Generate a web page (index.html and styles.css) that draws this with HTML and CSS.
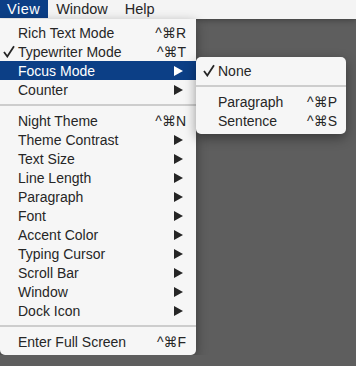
FILE: index.html
```html
<!DOCTYPE html>
<html lang="en">
<head>
    <meta charset="UTF-8">
    <meta name="viewport" content="width=device-width, initial-scale=1.0">
    <title>View menu</title>
    <link rel="stylesheet" href="styles.css">
</head>
<body>
    <div class="menubar">
        <span class="bar-item active">View</span>
        <span class="bar-item">Window</span>
        <span class="bar-item">Help</span>
    </div>

    <div class="menus">
        <div class="menu main-menu">
            <div class="row"><span class="gutter"></span><span class="label">Rich Text Mode</span><span class="key">^⌘R</span></div>
            <div class="row"><span class="gutter"><svg class="check" width="12" height="13" viewBox="0 0 12 13"><path d="M1 7 L4.3 11.5 L11 1.2" fill="none" stroke="currentColor" stroke-width="1.8"/></svg></span><span class="label">Typewriter Mode</span><span class="key">^⌘T</span></div>
            <div class="row selected"><span class="gutter"></span><span class="label">Focus Mode</span><span class="arrow"><svg width="9" height="10" viewBox="0 0 9 10"><polygon points="0,0 9,5 0,10" fill="currentColor"/></svg></span></div>
            <div class="row"><span class="gutter"></span><span class="label">Counter</span><span class="arrow"><svg width="9" height="10" viewBox="0 0 9 10"><polygon points="0,0 9,5 0,10" fill="currentColor"/></svg></span></div>
            <div class="separator"></div>
            <div class="row"><span class="gutter"></span><span class="label">Night Theme</span><span class="key">^⌘N</span></div>
            <div class="row"><span class="gutter"></span><span class="label">Theme Contrast</span><span class="arrow"><svg width="9" height="10" viewBox="0 0 9 10"><polygon points="0,0 9,5 0,10" fill="currentColor"/></svg></span></div>
            <div class="row"><span class="gutter"></span><span class="label">Text Size</span><span class="arrow"><svg width="9" height="10" viewBox="0 0 9 10"><polygon points="0,0 9,5 0,10" fill="currentColor"/></svg></span></div>
            <div class="row"><span class="gutter"></span><span class="label">Line Length</span><span class="arrow"><svg width="9" height="10" viewBox="0 0 9 10"><polygon points="0,0 9,5 0,10" fill="currentColor"/></svg></span></div>
            <div class="row"><span class="gutter"></span><span class="label">Paragraph</span><span class="arrow"><svg width="9" height="10" viewBox="0 0 9 10"><polygon points="0,0 9,5 0,10" fill="currentColor"/></svg></span></div>
            <div class="row"><span class="gutter"></span><span class="label">Font</span><span class="arrow"><svg width="9" height="10" viewBox="0 0 9 10"><polygon points="0,0 9,5 0,10" fill="currentColor"/></svg></span></div>
            <div class="row"><span class="gutter"></span><span class="label">Accent Color</span><span class="arrow"><svg width="9" height="10" viewBox="0 0 9 10"><polygon points="0,0 9,5 0,10" fill="currentColor"/></svg></span></div>
            <div class="row"><span class="gutter"></span><span class="label">Typing Cursor</span><span class="arrow"><svg width="9" height="10" viewBox="0 0 9 10"><polygon points="0,0 9,5 0,10" fill="currentColor"/></svg></span></div>
            <div class="row"><span class="gutter"></span><span class="label">Scroll Bar</span><span class="arrow"><svg width="9" height="10" viewBox="0 0 9 10"><polygon points="0,0 9,5 0,10" fill="currentColor"/></svg></span></div>
            <div class="row"><span class="gutter"></span><span class="label">Window</span><span class="arrow"><svg width="9" height="10" viewBox="0 0 9 10"><polygon points="0,0 9,5 0,10" fill="currentColor"/></svg></span></div>
            <div class="row"><span class="gutter"></span><span class="label">Dock Icon</span><span class="arrow"><svg width="9" height="10" viewBox="0 0 9 10"><polygon points="0,0 9,5 0,10" fill="currentColor"/></svg></span></div>
            <div class="separator"></div>
            <div class="row"><span class="gutter"></span><span class="label">Enter Full Screen</span><span class="key">^⌘F</span></div>
        </div>

        <div class="menu sub-menu">
            <div class="row"><span class="gutter"><svg class="check" width="12" height="13" viewBox="0 0 12 13"><path d="M1 7 L4.3 11.5 L11 1.2" fill="none" stroke="currentColor" stroke-width="1.8"/></svg></span><span class="label">None</span></div>
            <div class="separator"></div>
            <div class="row"><span class="gutter"></span><span class="label">Paragraph</span><span class="key">^⌘P</span></div>
            <div class="row"><span class="gutter"></span><span class="label">Sentence</span><span class="key">^⌘S</span></div>
        </div>
    </div>
</body>
</html>
```

FILE: styles.css
```css
body {
    margin: 0;
    background-color: #5e5e5e;
    font-family: "Liberation Sans", Arial, "DejaVu Sans", sans-serif;
    font-size: 14px;
    color: #262626;
}

.menubar {
    display: flex;
    height: 19px;
    background-color: #f4f4f4;
    box-shadow: 0 1px 6px rgba(0, 0, 0, 0.35);
    position: relative;
    z-index: 1;
}

.bar-item {
    display: flex;
    align-items: center;
    padding: 0 9px 0 8px;
    height: 18px;
    font-size: 14.5px;
}

.bar-item.active {
    background-color: #0c3f86;
    color: #fff;
    padding: 0 8px 0 7px;
    letter-spacing: 0.5px;
}

.menus {
    display: flex;
    align-items: flex-start;
}

.menu {
    background-color: #f6f6f6;
    padding: 4px 0;
    box-shadow: 0 4px 12px rgba(0, 0, 0, 0.4);
    position: relative;
    z-index: 2;
}

.main-menu {
    width: 196px;
    border-radius: 0 0 5px 5px;
}

.sub-menu {
    width: 150px;
    margin-top: 38px;
    border-radius: 5px;
    z-index: 3;
}

.row {
    display: flex;
    align-items: center;
    height: 19px;
    padding-right: 10px;
}

.gutter {
    width: 18px;
    flex: none;
    display: flex;
    align-items: center;
    padding-left: 3px;
    box-sizing: border-box;
}

.sub-menu .gutter {
    width: 22px;
    padding-left: 7px;
}

.sub-menu .row {
    padding-right: 9px;
}

.label {
    flex: 1;
    white-space: nowrap;
}

.key {
    white-space: nowrap;
}

.arrow {
    display: flex;
    margin-right: 3px;
}

.row.selected {
    background-color: #0c3f86;
    color: #fff;
}

.separator {
    height: 2px;
    background-color: #cdcdcd;
    margin: 5px 0;
}
```
